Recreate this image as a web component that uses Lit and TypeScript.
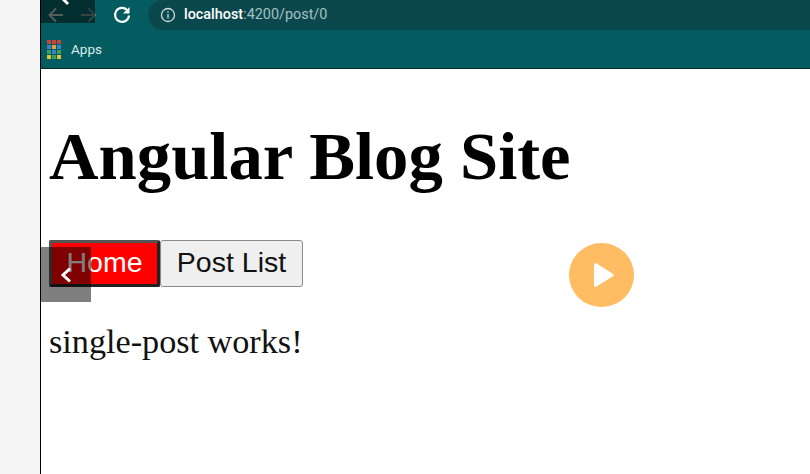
import { LitElement, html, css } from "lit";
import { customElement } from "lit/decorators.js";

@customElement("app-root")
export class AppRoot extends LitElement {
  static styles = css`
    :host { display: block; width: 810px; height: 474px; overflow: hidden; position: relative; background: #fff; }
    .shell { display: flex; height: 474px; }
    .gutter { width: 40px; background: #f5f5f5; border-right: 1px solid #000; flex: none; }
    .main { flex: 1; min-width: 0; display: flex; flex-direction: column; }
    .chrome { height: 68px; flex: none; background: #045c61; border-bottom: 1px solid #04282b; display: flex; flex-direction: column; }
    .toolbar { height: 30px; display: flex; align-items: center; padding-left: 5px; }
    .nav { width: 20px; height: 20px; display: block; flex: none; }
    .nav.fwd { margin-left: 12px; }
    .nav.reload { margin-left: 14px; }
    .omni { margin-left: 16px; flex: 1; height: 30px; margin-top: -1px; border-radius: 15px 0 0 15px; background: #0b484d; display: flex; align-items: center; padding-left: 12px; font: 14.4px "Roboto", "Liberation Sans", sans-serif; color: #a5c0c2; }
    .omni svg { width: 16px; height: 16px; margin-right: 8px; flex: none; }
    .host { color: #fff; font-weight: 500; }
    .bookmarks { height: 38px; display: flex; align-items: center; padding: 0 0 0 6px; font: 13.5px "Roboto", "Liberation Sans", sans-serif; color: #dcecec; }
    .apps { display: grid; grid-template-columns: repeat(3, 4px); grid-auto-rows: 4px; gap: 1px; margin-right: 10px; }
    .apps i { display: block; width: 4px; height: 4px; }
    .page { padding: 0 0 0 8px; color: #000; font-family: "Liberation Serif", "Times New Roman", serif; }
    h1 { margin: 50px 0 0; font-size: 68.7px; line-height: 74px; font-weight: 700; letter-spacing: 0; }
    .btns { display: flex; margin-top: 47px; align-items: flex-start; }
    button { font: 28.5px "Liberation Sans", Arial, sans-serif; height: 47px; padding: 0 0 2px; border-radius: 3px; color: #111; }
    .home { width: 111px; background: #fe0000; color: #fff; border: 3px solid #222; border-top-color: #555; border-left-color: #555; border-radius: 2px; }
    .list { width: 143px; background: #efefef; border: 1px solid #8a8a8a; }
    p { margin: 36px 0 0; font-size: 34.2px; line-height: 37px; color: #111; }
    .shade-top { position: absolute; left: 41px; top: 0; width: 54px; height: 23px; background: rgba(0,0,0,.5); }
    .tick { position: absolute; left: 59px; top: -3px; width: 14px; height: 10px; }
    .shade-left { position: absolute; left: 41px; top: 247px; width: 50px; height: 55px; background: rgba(0,0,0,.5); }
    .chev { position: absolute; left: 59px; top: 266px; width: 14px; height: 18px; }
    .play { position: absolute; left: 569px; top: 243px; width: 65px; height: 64px; }
  `;

  render() {
    const colors = ["#c5453a","#c5453a","#c5453a","#3f7fd0","#e2a33a","#3f7fd0","#3aa05a","#3f7fd0","#3aa05a","#e2c23a","#3aa05a","#e2c23a"];
    return html`
      <div class="shell">
        <div class="gutter"></div>
        <div class="main">
          <div class="chrome">
            <div class="toolbar">
              <svg class="nav" viewBox="0 0 20 20" fill="none" stroke="#a8b8b8" stroke-width="2"><path d="M17 10H4M10 3.5 3.5 10l6.5 6.5"/></svg>
              <svg class="nav fwd" viewBox="0 0 20 20" fill="none" stroke="#6a8484" stroke-width="2"><path d="M3 10h14M10.500 3.500l6.500 6.500-6.500 6.500"/></svg>
              <svg class="nav reload" viewBox="0 0 20 20" fill="none" stroke="#fff" stroke-width="2.200"><path d="M17 10.500a7 7 0 1 1-2-5.500"/><path d="M17.500 2v6.500h-6.500z" fill="#fff" stroke="none"/></svg>
              <div class="omni">
                <svg viewBox="0 0 16 16" fill="none" stroke="#cfdcdc" stroke-width="1.300"><circle cx="8" cy="8" r="6.500"/><path d="M8 7v4.500M8 4.300v1.500"/></svg>
                <span class="host">localhost</span><span>:4200/post/0</span>
              </div>
            </div>
            <div class="bookmarks">
              <div class="apps">${colors.map((c) => html`<i style="background:${c}"></i>`)}</div>
              <span>Apps</span>
            </div>
          </div>
          <div class="page">
            <h1>Angular Blog Site</h1>
            <div class="btns">
              <button class="home">Home</button>
              <button class="list">Post List</button>
            </div>
            <p>single-post works!</p>
          </div>
        </div>
      </div>
      <div class="shade-top"></div>
      <svg class="tick" viewBox="0 0 14 10" fill="none" stroke="#fff" stroke-width="3"><path d="M2 0l7 7"/></svg>
      <div class="shade-left"></div>
      <svg class="chev" viewBox="0 0 14 18" fill="none" stroke="#fff" stroke-width="3"><path d="M11 2.500 4 9l7 6.500"/></svg>
      <svg class="play" viewBox="0 0 65 64"><ellipse cx="32.500" cy="32" rx="32.500" ry="32" fill="#ffbc62"/><path d="M26.500 21.500 43 32 26.500 42.500z" fill="#fff" stroke="#fff" stroke-width="3" stroke-linejoin="round"/></svg>
    `;
  }
}
